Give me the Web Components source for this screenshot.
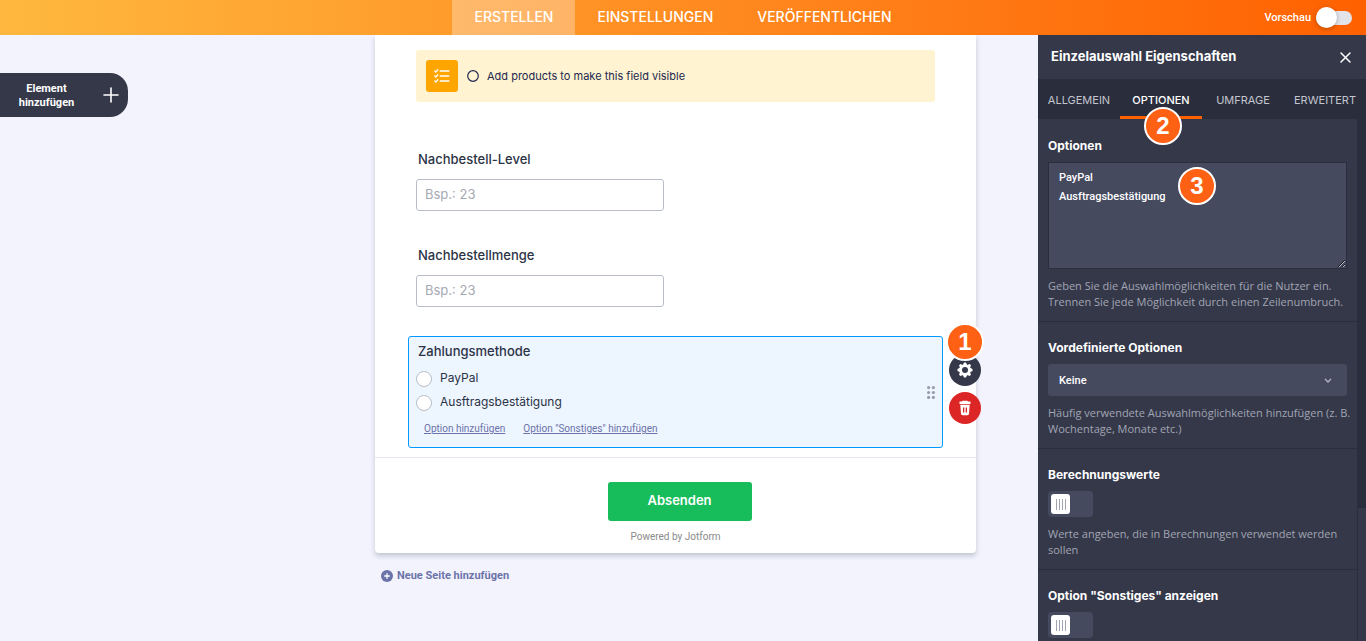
<!DOCTYPE html>
<html lang="de">
<head>
<meta charset="UTF-8">
<meta name="viewport" content="width=device-width, initial-scale=1">
<title>Formulargenerator</title>
<style>
  body {
    margin: 0;
    font-family: Inter, "Liberation Sans", sans-serif;
    background: #f3f3fe;
    color: #2c3345;
  }
</style>
</head>
<body>
<builder-app></builder-app>

<script>
class BuilderApp extends HTMLElement {
  connectedCallback() {
    this.attachShadow({ mode: 'open' });
    this.shadowRoot.innerHTML = `
      <style>
        :host {
          display: flex;
          flex-direction: column;
          height: 100vh;
          overflow: hidden;
        }

        .body {
          flex: 1;
          min-height: 0;
          display: grid;
          grid-template-columns: minmax(0, 1fr) 328px;
        }

        .workspace {
          display: grid;
          grid-template-columns: minmax(128px, 375px) minmax(0, 601px) minmax(60px, 1fr);
          align-items: start;
          overflow: hidden;
        }

        .new-page {
          display: flex;
          align-items: center;
          gap: 4px;
          margin: 14px 0 0 6px;
          padding: 0;
          border: 0;
          background: none;
          color: #6c73a8;
          font: 700 11px/18px Roboto, sans-serif;
        }
      </style>

      <top-bar></top-bar>
      <div class="body">
        <main class="workspace">
          <add-element></add-element>
          <div>
            <form-card>
              <product-notice>Add products to make this field visible</product-notice>
              <text-field label="Nachbestell-Level" hint="Bsp.: 23"></text-field>
              <text-field label="Nachbestellmenge" hint="Bsp.: 23"></text-field>
              <choice-field label="Zahlungsmethode" options="PayPal|Ausftragsbestätigung"></choice-field>
            </form-card>
            <button class="new-page" type="button">
              <svg width="12" height="12" viewBox="0 0 12 12" aria-hidden="true">
                <circle cx="6" cy="6" r="6" fill="#6c73a8"/>
                <path d="M6 3.2v5.6M3.2 6h5.6" stroke="#fff" stroke-width="1.3"/>
              </svg>
              Neue Seite hinzufügen
            </button>
          </div>
        </main>
        <properties-panel></properties-panel>
      </div>
    `;
  }
}

class TopBar extends HTMLElement {
  connectedCallback() {
    this.attachShadow({ mode: 'open' });
    this.shadowRoot.innerHTML = `
      <style>
        :host {
          display: grid;
          grid-template-columns: 1fr auto 1fr;
          height: 35px;
          background: linear-gradient(90deg, #ffb83f, #ff9a2a 35%, #ff7a14 70%, #ff6100);
          color: #fff;
        }

        nav {
          grid-column: 2;
          display: flex;
        }

        nav a {
          padding: 0 22px;
          color: #fff;
          font-size: 14px;
          font-weight: 500;
          line-height: 34px;
          text-decoration: none;
        }

        nav a.active {
          background: rgba(255, 255, 255, 0.3);
        }

        .preview {
          justify-self: end;
          display: flex;
          align-items: center;
          gap: 5px;
          padding-right: 14px;
          font: 500 11px/16px Roboto, sans-serif;
        }

        .preview input {
          appearance: none;
          position: relative;
          width: 36px;
          height: 14px;
          margin: 0;
          border-radius: 7px;
          background: #e3e3ea;
        }

        .preview input::before {
          content: "";
          position: absolute;
          left: 0;
          top: -4px;
          width: 21px;
          height: 21px;
          border-radius: 50%;
          background: #fff;
          box-shadow: 0 1px 4px rgba(0, 0, 0, 0.3);
        }
      </style>

      <nav>
        <a class="active" href="#erstellen">ERSTELLEN</a>
        <a href="#einstellungen">EINSTELLUNGEN</a>
        <a href="#veroeffentlichen">VERÖFFENTLICHEN</a>
      </nav>
      <label class="preview">Vorschau <input type="checkbox"></label>
    `;
  }
}

class AddElement extends HTMLElement {
  connectedCallback() {
    this.attachShadow({ mode: 'open' });
    this.shadowRoot.innerHTML = `
      <style>
        :host {
          display: block;
          padding-top: 38px;
        }

        button {
          display: flex;
          align-items: center;
          width: 128px;
          height: 44px;
          padding: 0 9px 0 0;
          border: 0;
          border-radius: 0 18px 18px 0;
          background: #343849;
          color: #fff;
          font: 700 11px/14px Roboto, sans-serif;
        }

        span {
          flex: 1;
          padding: 2px 10px 0 0;
        }
      </style>

      <button type="button">
        <span>Element<br>hinzufügen</span>
        <svg width="16" height="16" viewBox="0 0 16 16" aria-hidden="true">
          <path d="M8 1v14M1 8h14" stroke="#fff" stroke-width="1.6" stroke-linecap="round"/>
        </svg>
      </button>
    `;
  }
}

class FormCard extends HTMLElement {
  connectedCallback() {
    this.attachShadow({ mode: 'open' });
    this.shadowRoot.innerHTML = `
      <style>
        :host {
          display: block;
          background: #fff;
          border-radius: 0 0 4px 4px;
          box-shadow: 0 3px 5px rgba(84, 95, 111, 0.3);
        }

        .fields {
          padding: 15px 33px 9px;
        }

        footer {
          display: flex;
          flex-direction: column;
          align-items: center;
          padding: 24px 0 8px;
          border-top: 1px solid #e3e5f0;
        }

        .submit {
          padding-left: 8px;
        }

        button {
          width: 144px;
          height: 39px;
          padding: 0 0 3px;
          border: 0;
          border-radius: 3px;
          background: #18bd5b;
          color: #fff;
          font: 600 13px/20px Inter, sans-serif;
        }

        small {
          margin-top: 8px;
          color: #8a8a8a;
          font: 10px/16px Roboto, sans-serif;
        }
      </style>

      <div class="fields"><slot></slot></div>
      <footer>
        <div class="submit"><button type="submit">Absenden</button></div>
        <small>Powered by Jotform</small>
      </footer>
    `;
  }
}

class ProductNotice extends HTMLElement {
  connectedCallback() {
    this.attachShadow({ mode: 'open' });
    this.shadowRoot.innerHTML = `
      <style>
        :host {
          display: flex;
          align-items: center;
          gap: 9px;
          margin: 0 8px 42px;
          padding: 10px;
          border-radius: 3px;
          background: #fff3d1;
          color: #22284f;
          font-size: 11px;
          line-height: 16px;
        }

        .icon {
          display: grid;
          place-items: center;
          width: 32px;
          height: 32px;
          border-radius: 3px;
          background: #ffa500;
        }

        .text {
          display: flex;
          align-items: center;
          gap: 8px;
        }
      </style>

      <div class="icon">
        <svg width="16" height="14" viewBox="0 0 16 14" fill="none" stroke="#fff" stroke-linecap="round" aria-hidden="true">
          <path d="M6.2 2h8.6M6.2 7h8.6M6.2 12h8.6" stroke-width="1.5"/>
          <path d="M.8 2l1 1L3.8.8M.8 7l1 1 2-2.2M.8 12l1 1 2-2.2" stroke-width="1.3"/>
        </svg>
      </div>
      <div class="text">
        <svg width="12" height="12" viewBox="0 0 12 12" aria-hidden="true">
          <circle cx="6" cy="6" r="5.3" fill="none" stroke="#22284f" stroke-width="1.2"/>
        </svg>
        <slot></slot>
      </div>
    `;
  }
}

class TextField extends HTMLElement {
  connectedCallback() {
    this.attachShadow({ mode: 'open' });
    this.shadowRoot.innerHTML = `
      <style>
        :host {
          display: block;
          padding: 6px 8px 29px;
        }

        label {
          display: block;
          margin: 0 2px 11px;
          font-size: 13px;
          font-weight: 500;
          line-height: 18px;
        }

        input {
          display: block;
          box-sizing: border-box;
          width: 248px;
          max-width: 100%;
          height: 32px;
          padding: 0 8px 2px;
          border: 1px solid #b8bdc9;
          border-radius: 3px;
          font: 13px Inter, sans-serif;
        }

        input::placeholder {
          color: #a5a9b3;
        }
      </style>

      <label for="value">${this.getAttribute('label')}</label>
      <input id="value" type="text" placeholder="${this.getAttribute('hint')}">
    `;
  }
}

class ChoiceField extends HTMLElement {
  connectedCallback() {
    const options = this.getAttribute('options').split('|').map(option => `
      <label class="option"><input type="radio" name="choice"><span>${option}</span></label>
    `).join('');

    this.attachShadow({ mode: 'open' });
    this.shadowRoot.innerHTML = `
      <style>
        :host {
          display: block;
          position: relative;
          padding: 5px 7px 10px;
          border: 1px solid #0099ff;
          border-radius: 3px;
          background: #edf5ff;
        }

        fieldset {
          margin: 0;
          padding: 0;
          border: 0;
        }

        legend {
          margin-bottom: 6px;
          padding: 0 2px;
          font-size: 13px;
          font-weight: 500;
          line-height: 18px;
        }

        .option {
          display: flex;
          align-items: center;
          gap: 8px;
          height: 24px;
          font-size: 12px;
        }

        .option input {
          appearance: none;
          box-sizing: border-box;
          width: 16px;
          height: 16px;
          margin: 2px 0 0;
          border: 1px solid #b8bdc9;
          border-radius: 50%;
          background: #fff;
        }

        .option span {
          padding-bottom: 2px;
        }

        .links {
          display: flex;
          gap: 18px;
          padding: 7px 8px 0;
          font: 10px/16px Roboto, sans-serif;
        }

        .links a {
          color: #6c73a8;
        }

        .drag {
          position: absolute;
          right: 7px;
          top: 49px;
        }

        .actions {
          position: absolute;
          right: -39px;
          top: 17px;
          display: grid;
          gap: 6px;
        }

        .actions button {
          display: grid;
          place-items: center;
          width: 32px;
          height: 32px;
          padding: 0;
          border: 0;
          border-radius: 50%;
          background: #343849;
        }

        .actions button.delete {
          background: #dc2626;
        }

        step-badge {
          position: absolute;
          right: -42px;
          top: -14px;
        }
      </style>

      <fieldset>
        <legend>${this.getAttribute('label')}</legend>
        ${options}
      </fieldset>
      <div class="links">
        <a href="#option">Option hinzufügen</a>
        <a href="#sonstiges">Option "Sonstiges" hinzufügen</a>
      </div>

      <svg class="drag" width="8" height="13" viewBox="0 0 8 13" fill="#979dad" aria-hidden="true">
        <circle cx="1.6" cy="1.6" r="1.6"/><circle cx="6.4" cy="1.6" r="1.6"/>
        <circle cx="1.6" cy="6.5" r="1.6"/><circle cx="6.4" cy="6.5" r="1.6"/>
        <circle cx="1.6" cy="11.4" r="1.6"/><circle cx="6.4" cy="11.4" r="1.6"/>
      </svg>

      <div class="actions">
        <button type="button" aria-label="Eigenschaften">
          <svg width="16" height="16" viewBox="-8 -8 16 16" aria-hidden="true">
            <g fill="#fff">
              <circle r="5.6"/>
              <path id="teeth" d="M-2.2-5-.9-7.5H.9L2.2-5V5L.9 7.5H-.9L-2.2 5z"/>
              <use href="#teeth" transform="rotate(45)"/>
              <use href="#teeth" transform="rotate(90)"/>
              <use href="#teeth" transform="rotate(135)"/>
            </g>
            <circle r="3" fill="#343849"/>
          </svg>
        </button>
        <button class="delete" type="button" aria-label="Löschen">
          <svg width="14" height="16" viewBox="0 0 14 16" aria-hidden="true">
            <path fill="#fff" fill-rule="evenodd" d="M4.6.7h4.8l.6.8h2.5v2.4h-11V1.5H4zM2.3 4.7h9.400l-.7 9.100q-.1 1.400-1.500 1.400h-5Q3.100 15.200 3 13.800zM5 7.500v5h1.300v-5zm2.700 0v5H9v-5z"/>
          </svg>
        </button>
      </div>
      <step-badge>1</step-badge>
    `;
  }
}

class StepBadge extends HTMLElement {
  connectedCallback() {
    this.attachShadow({ mode: 'open' });
    this.shadowRoot.innerHTML = `
      <style>
        :host {
          display: grid;
          place-items: center;
          box-sizing: border-box;
          width: 38px;
          height: 38px;
          border: 2px solid #fff;
          border-radius: 50%;
          background: #ff6114;
          color: #fff;
          font: 700 24px/34px "Liberation Sans", sans-serif;
        }
      </style>
      <slot></slot>
    `;
  }
}

class PropertiesPanel extends HTMLElement {
  connectedCallback() {
    this.attachShadow({ mode: 'open' });
    this.shadowRoot.innerHTML = `
      <style>
        :host {
          display: flex;
          flex-direction: column;
          min-height: 0;
          background: #343849;
          color: #fff;
        }

        header {
          display: flex;
          align-items: center;
          justify-content: space-between;
          height: 44px;
          padding: 0 14px 0 13px;
        }

        h2 {
          margin: 0;
          padding-bottom: 2px;
          font-size: 13px;
          font-weight: 700;
          line-height: 18px;
        }

        header button {
          display: grid;
          place-items: center;
          padding: 0;
          border: 0;
          background: none;
        }

        .tabs {
          display: grid;
          grid-template-columns: repeat(4, 1fr);
          height: 40px;
          background: #2a2d3b;
        }

        .tab {
          position: relative;
          padding: 0;
          border: 0;
          border-bottom: 3px solid transparent;
          border-top: 4px solid transparent;
          background: none;
          color: #c3c5cf;
          font: 11px/16px Inter, sans-serif;
        }

        .tab.active {
          border-bottom-color: #ff6100;
          color: #fff;
          font-weight: 500;
        }

        .tab step-badge {
          position: absolute;
          left: 24px;
          top: 24px;
          z-index: 1;
        }

        .scroll {
          flex: 1;
          min-height: 0;
          display: grid;
          grid-template-columns: minmax(0, 1fr) 9px;
        }

        .list {
          overflow: hidden;
          padding-top: 1px;
        }

        .rail {
          border-left: 1px solid #2a2d3b;
        }

        .thumb {
          height: 389px;
          background: #2a2d3b;
        }
      </style>

      <header>
        <h2>Einzelauswahl Eigenschaften</h2>
        <button type="button" aria-label="Schließen">
          <svg width="13" height="13" viewBox="0 0 13 13" aria-hidden="true">
            <path d="M2 2l9 9M11 2l-9 9" stroke="#fff" stroke-width="1.5" stroke-linecap="round"/>
          </svg>
        </button>
      </header>
      <div class="tabs" role="tablist">
        <button class="tab" role="tab" type="button">ALLGEMEIN</button>
        <button class="tab active" role="tab" type="button" aria-selected="true">OPTIONEN<step-badge>2</step-badge></button>
        <button class="tab" role="tab" type="button">UMFRAGE</button>
        <button class="tab" role="tab" type="button">ERWEITERT</button>
      </div>
      <div class="scroll">
        <div class="list">
          <property-item type="textarea" label="Optionen" value="PayPal&#10;Ausftragsbestätigung">Geben Sie die Auswahlmöglichkeiten für die Nutzer ein. Trennen Sie jede Möglichkeit durch einen Zeilenumbruch.</property-item>
          <property-item type="select" label="Vordefinierte Optionen" value="Keine">Häufig verwendete Auswahlmöglichkeiten hinzufügen (z. B. Wochentage, Monate etc.)</property-item>
          <property-item type="toggle" label="Berechnungswerte">Werte angeben, die in Berechnungen verwendet werden sollen</property-item>
          <property-item type="toggle" label='Option "Sonstiges" anzeigen'></property-item>
        </div>
        <div class="rail"><div class="thumb"></div></div>
      </div>
    `;
  }
}

class PropertyItem extends HTMLElement {
  control() {
    const value = this.getAttribute('value') || '';
    switch (this.getAttribute('type')) {
      case 'textarea':
        return `<textarea id="control">${value}</textarea><step-badge>3</step-badge>`;
      case 'select':
        return `
          <select id="control"><option>${value}</option></select>
          <svg class="arrow" width="8" height="6" viewBox="0 0 8 6" aria-hidden="true">
            <path d="M1 1l3 3 3-3" fill="none" stroke="#b3b6c4" stroke-width="1.3"/>
          </svg>`;
      default:
        return '<input id="control" type="checkbox">';
    }
  }

  connectedCallback() {
    this.attachShadow({ mode: 'open' });
    this.shadowRoot.innerHTML = `
      <style>
        :host {
          display: block;
          padding: 17px 2px 11px 10px;
          border-bottom: 1px solid #2a2d3b;
        }

        label {
          display: block;
          margin-bottom: 7px;
          font-size: 12px;
          font-weight: 700;
          line-height: 18px;
        }

        .control {
          position: relative;
          margin: 0 8px 9px 0;
        }

        textarea,
        select {
          display: block;
          box-sizing: border-box;
          width: 100%;
          margin: 0;
          background: #454a5f;
          color: #fff;
          font: 500 11px/19px Roboto, sans-serif;
        }

        textarea {
          height: 107px;
          padding: 5px 10px;
          border: 1px solid #2a2d3b;
        }

        select {
          appearance: none;
          height: 32px;
          padding: 0 11px;
          border: 0;
          border-radius: 3px;
        }

        .arrow {
          position: absolute;
          right: 15px;
          top: 14px;
        }

        input {
          appearance: none;
          display: block;
          box-sizing: border-box;
          width: 45px;
          height: 26px;
          margin: 0;
          padding: 3px;
          border-radius: 4px;
          background: #454a5f;
        }

        input::before {
          content: "";
          display: block;
          width: 19px;
          height: 20px;
          border-radius: 3px;
          background:
            repeating-linear-gradient(90deg, #a0a4b3 0 1px, transparent 1px 3px) center / 10px 11px no-repeat,
            #fff;
        }

        step-badge {
          position: absolute;
          left: 130px;
          top: 5px;
        }

        p {
          margin: 0;
          color: #a2a5b3;
          font: 11px/16px "Open Sans", sans-serif;
        }
      </style>

      <label for="control">${this.getAttribute('label')}</label>
      <div class="control">${this.control()}</div>
      <p><slot></slot></p>
    `;
  }
}

customElements.define('step-badge', StepBadge);
customElements.define('top-bar', TopBar);
customElements.define('add-element', AddElement);
customElements.define('product-notice', ProductNotice);
customElements.define('text-field', TextField);
customElements.define('choice-field', ChoiceField);
customElements.define('form-card', FormCard);
customElements.define('property-item', PropertyItem);
customElements.define('properties-panel', PropertiesPanel);
customElements.define('builder-app', BuilderApp);
</script>
</body>
</html>
